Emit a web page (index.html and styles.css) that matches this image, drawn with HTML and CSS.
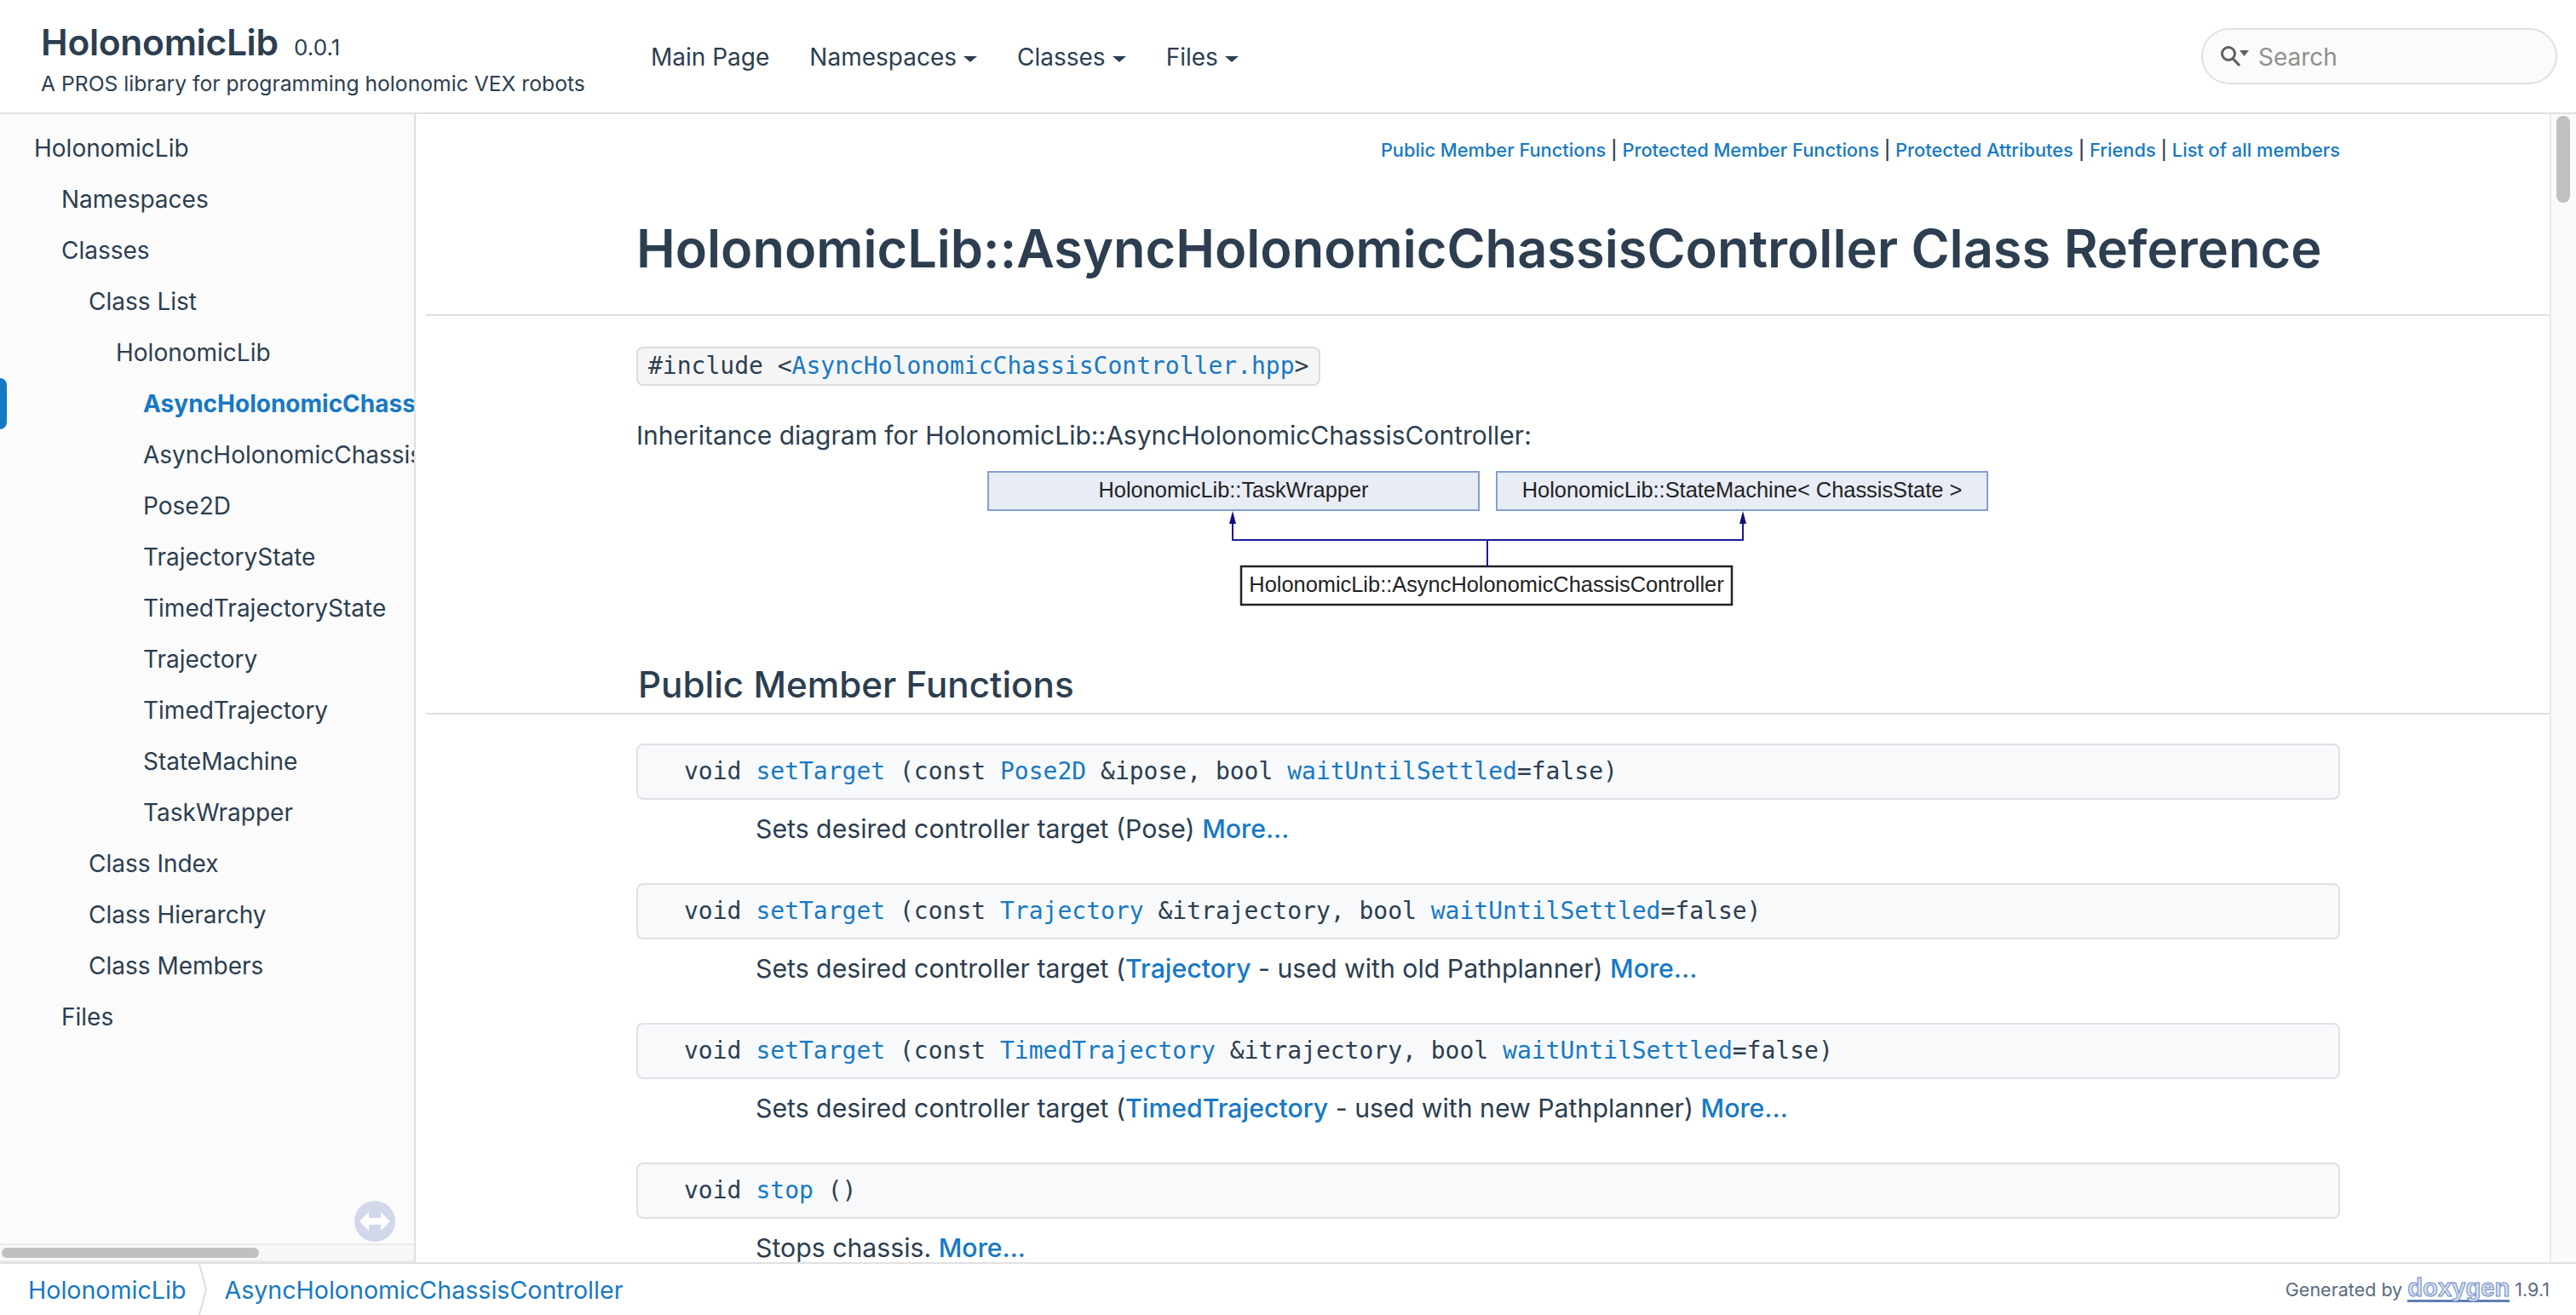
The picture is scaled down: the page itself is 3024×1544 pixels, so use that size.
FILE: index.html
```html
<!DOCTYPE html>
<html lang="en">
<head>
  <meta charset="UTF-8" />
  <title>HolonomicLib: HolonomicLib::AsyncHolonomicChassisController Class Reference</title>
  <link rel="stylesheet" href="styles.css">
</head>
<body>
  <header class="top-bar">
    <div class="project">
      <div class="project-name">HolonomicLib <span class="project-number">0.0.1</span></div>
      <div class="project-brief">A PROS library for programming holonomic VEX robots</div>
    </div>
    <nav class="main-menu">
      <a>Main Page</a>
      <a class="has-caret">Namespaces</a>
      <a class="has-caret">Classes</a>
      <a class="has-caret">Files</a>
    </nav>
    <div class="search-box">
      <svg class="search-icon" width="34" height="26" viewBox="0 0 34 26">
        <circle cx="10" cy="10" r="7.5" fill="none" stroke="#5f5f5f" stroke-width="3"/>
        <path d="M15 15.5 L23 24" stroke="#5f5f5f" stroke-width="3.2" fill="none"/>
        <path d="M23 6 H34 L28.5 13 Z" fill="#5f5f5f"/>
      </svg>
      <span class="search-text">Search</span>
    </div>
  </header>

  <div class="middle">
    <aside class="side-nav">
      <div class="tree">
        <div class="tree-item level-0">HolonomicLib</div>
        <div class="tree-item level-1">Namespaces</div>
        <div class="tree-item level-1">Classes</div>
        <div class="tree-item level-2">Class List</div>
        <div class="tree-item level-3">HolonomicLib</div>
        <div class="tree-item level-4 selected">AsyncHolonomicChassisController</div>
        <div class="tree-item level-4">AsyncHolonomicChassisControllerBuilder</div>
        <div class="tree-item level-4">Pose2D</div>
        <div class="tree-item level-4">TrajectoryState</div>
        <div class="tree-item level-4">TimedTrajectoryState</div>
        <div class="tree-item level-4">Trajectory</div>
        <div class="tree-item level-4">TimedTrajectory</div>
        <div class="tree-item level-4">StateMachine</div>
        <div class="tree-item level-4">TaskWrapper</div>
        <div class="tree-item level-2">Class Index</div>
        <div class="tree-item level-2">Class Hierarchy</div>
        <div class="tree-item level-2">Class Members</div>
        <div class="tree-item level-1">Files</div>
      </div>
      <svg class="sync-toggle" width="48" height="48" viewBox="0 0 48 48">
        <circle cx="24" cy="24" r="24" fill="#d0d8ea"/>
        <path d="M6 24 L17 13 V20 H31 V13 L42 24 L31 35 V28 H17 V35 Z" fill="#fff"/>
      </svg>
      <div class="h-scroll"><div class="h-thumb"></div></div>
    </aside>

    <main class="content">
      <div class="summary">
        <a>Public Member Functions</a> | <a>Protected Member Functions</a> | <a>Protected Attributes</a> | <a>Friends</a> | <a>List of all members</a>
      </div>
      <div class="page-title">
        <h1>HolonomicLib::AsyncHolonomicChassisController Class Reference</h1>
      </div>

      <div class="body-block">
        <div class="include-line"><code>#include &lt;<a>AsyncHolonomicChassisController.hpp</a>&gt;</code></div>
        <p class="inherit-text">Inheritance diagram for HolonomicLib::AsyncHolonomicChassisController:</p>
        <div class="diagram">
          <svg width="1176" height="160" viewBox="0 0 1176 160">
            <rect x="1" y="1" width="576" height="45" fill="#e8ecf5" stroke="#84a0d4" stroke-width="2"/>
            <rect x="598" y="1" width="576" height="45" fill="#e8ecf5" stroke="#84a0d4" stroke-width="2"/>
            <rect x="298" y="112" width="576" height="45" fill="#fff" stroke="#222" stroke-width="2.5"/>
            <path d="M288 62 V81 H887 V62 M587 81 V112" fill="none" stroke="#1a1a9c" stroke-width="2"/>
            <path d="M288 47 L292 62 H284 Z M887 47 L891 62 H883 Z" fill="#10107c"/>
            <text class="diagram-label" x="289" y="31" text-anchor="middle">HolonomicLib::TaskWrapper</text>
            <text class="diagram-label" x="886" y="31" text-anchor="middle">HolonomicLib::StateMachine&lt; ChassisState &gt;</text>
            <text class="diagram-label" x="586" y="142" text-anchor="middle">HolonomicLib::AsyncHolonomicChassisController</text>
          </svg>
        </div>
      </div>

      <h2 class="group-title"><span>Public Member Functions</span></h2>

      <div class="body-block">
        <div class="member">
          <div class="member-sig"><span class="member-type">void</span><code><a>setTarget</a> (const <a>Pose2D</a> &amp;ipose, bool <a>waitUntilSettled</a>=false)</code></div>
          <div class="member-desc">Sets desired controller target (Pose) <a class="more">More...</a></div>
        </div>
        <div class="member">
          <div class="member-sig"><span class="member-type">void</span><code><a>setTarget</a> (const <a>Trajectory</a> &amp;itrajectory, bool <a>waitUntilSettled</a>=false)</code></div>
          <div class="member-desc">Sets desired controller target (<a class="more">Trajectory</a> - used with old Pathplanner) <a class="more">More...</a></div>
        </div>
        <div class="member">
          <div class="member-sig"><span class="member-type">void</span><code><a>setTarget</a> (const <a>TimedTrajectory</a> &amp;itrajectory, bool <a>waitUntilSettled</a>=false)</code></div>
          <div class="member-desc">Sets desired controller target (<a class="more">TimedTrajectory</a> - used with new Pathplanner) <a class="more">More...</a></div>
        </div>
        <div class="member">
          <div class="member-sig"><span class="member-type">void</span><code><a>stop</a> ()</code></div>
          <div class="member-desc">Stops chassis. <a class="more">More...</a></div>
        </div>
      </div>
    </main>

    <div class="v-scroll"><div class="v-thumb"></div></div>
  </div>

  <footer class="bottom-bar">
    <div class="crumbs">
      <a>HolonomicLib</a>
      <svg class="crumb-sep" width="12" height="60" viewBox="0 0 12 60"><path d="M1 0 L9 30 L1 60" fill="none" stroke="#ddd" stroke-width="2"/></svg>
      <a>AsyncHolonomicChassisController</a>
    </div>
    <div class="generated">Generated by <span class="doxygen">doxygen</span> 1.9.1</div>
  </footer>
</body>
</html>
```

FILE: styles.css
```css
html, body { margin: 0; height: 100%; }
body {
  display: flex;
  flex-direction: column;
  height: 1544px;
  overflow: hidden;
  font-family: Inter, "Liberation Sans", sans-serif;
  color: #2c3e50;
  background: #fff;
}
a { color: #1779c4; text-decoration: none; }
code { font-family: "DejaVu Sans Mono", monospace; font-size: 28px; }

/* header */
.top-bar {
  flex: none;
  height: 132px;
  border-bottom: 2px solid #e0e0e0;
  display: flex;
  align-items: center;
  padding: 0 22px 0 48px;
}
.project { width: 716px; padding-top: 3px; }
.project-name { font-size: 42.5px; font-weight: 600; line-height: 54px; letter-spacing: -0.3px; color: #2c3e50; }
.project-number { font-size: 26px; font-weight: 400; margin-left: 8px; letter-spacing: 0; }
.project-brief { font-size: 24.7px; line-height: 30px; }
.main-menu { display: flex; flex: 1; gap: 47px; font-size: 28px; padding-top: 2px; }
.main-menu a { color: #2c3e50; }
.has-caret::after {
  content: "";
  display: inline-block;
  margin-left: 8px;
  vertical-align: 4px;
  border-top: 7px solid #2c3e50;
  border-left: 8px solid transparent;
  border-right: 8px solid transparent;
}
.search-box {
  width: 394px;
  height: 62px;
  border: 2px solid #e0e0e0;
  border-radius: 33px;
  background: #fbfbfb;
  display: flex;
  align-items: center;
  padding-left: 20px;
}
.search-icon { margin-right: 11px; }
.search-text { font-size: 28px; color: #909090; padding-top: 1px; }

/* middle */
.middle { flex: 1; display: flex; min-height: 0; }
.side-nav {
  position: relative;
  flex: none;
  width: 486px;
  background: #fbfbfb;
  border-right: 2px solid #e0e0e0;
  display: flex;
  flex-direction: column;
  overflow: hidden;
}
.tree { flex: 1; padding-top: 10px; }
.tree-item {
  position: relative;
  height: 60px;
  line-height: 60px;
  font-size: 28px;
  white-space: nowrap;
}
.level-0 { padding-left: 40px; }
.level-1 { padding-left: 72px; }
.level-2 { padding-left: 104px; }
.level-3 { padding-left: 136px; }
.level-4 { padding-left: 168px; }
.selected {
  font-weight: 700;
  color: #1779c4;
}
.selected::before {
  content: "";
  position: absolute;
  left: 0;
  top: 0;
  width: 8px;
  height: 60px;
  background: #1779c4;
  border-radius: 0 8px 8px 0;
}
.sync-toggle { position: absolute; left: 416px; top: 1276px; }
.h-scroll {
  flex: none;
  height: 15px;
  background: #f8f8f8;
  border-top: 2px solid #eaeaea;
  border-bottom: 2px solid #eaeaea;
  padding: 3px 0 0 2px;
}
.h-thumb { width: 302px; height: 12px; background: #c0c0c0; border-radius: 6px; }

.content { flex: 1; min-width: 0; overflow: hidden; padding: 0 0 0 12px; }
.summary {
  font-size: 21.8px;
  font-weight: 500;
  line-height: 28px;
  text-align: right;
  padding: 28px 246px 0 0;
}
.page-title { border-bottom: 2px solid #e0e0e0; padding: 0 0 0 247px; }
h1 {
  margin: 0;
  padding: 62px 0 37px;
  font-size: 61.3px;
  line-height: 80px;
  font-weight: 600;
  white-space: nowrap;
}
.body-block { padding: 0 246px 0 247px; }
.include-line {
  display: inline-block;
  margin-top: 36px;
  padding: 0 12px;
  height: 42px;
  line-height: 42px;
  background: #f5f5f5;
  border: 2px solid #ddd;
  border-radius: 8px;
}
.inherit-text { margin: 37px 0 0; font-size: 30px; line-height: 42px; }
.diagram { display: flex; justify-content: center; margin-top: 21px; }
.diagram-label { font-family: "Liberation Sans", sans-serif; font-size: 25.4px; fill: #222; }
.group-title {
  margin: 0;
  padding: 63px 0 5px 249px;
  border-bottom: 2px solid #e0e0e0;
  font-size: 42.2px;
  line-height: 56px;
  font-weight: 500;
}
.body-block:last-child { padding-top: 34px; }
.member { height: 164px; }
.member-sig {
  height: 62px;
  line-height: 62px;
  background: #f8f9fb;
  border: 2px solid #dee0e4;
  border-radius: 8px;
  display: flex;
  padding-left: 54px;
  white-space: nowrap;
}
.member-type { font-family: "DejaVu Sans Mono", monospace; font-size: 28px; margin-right: 17px; }
.member-desc { padding: 14px 0 0 140px; font-size: 30.25px; line-height: 40px; white-space: nowrap; }
.more { font-weight: 500; }

.v-scroll {
  flex: none;
  width: 31px;
  background: #fafafa;
  border-left: 2px solid #e8e8e8;
  padding: 2px 0 0 6px;
  box-sizing: border-box;
}
.v-thumb { width: 16px; height: 102px; background: #c0c0c0; border-radius: 8px; }

/* footer */
.bottom-bar {
  flex: none;
  height: 60px;
  border-top: 2px solid #e0e0e0;
  display: flex;
  align-items: center;
  justify-content: space-between;
  padding: 0 31px 0 33px;
}
.crumbs { display: flex; align-items: center; font-size: 28.6px; }
.crumb-sep { margin: 0 18px 0 15px; }
.generated { font-size: 21.5px; color: #5b6b80; display: flex; align-items: center; white-space: pre; }
.doxygen {
  font-family: "Liberation Sans", sans-serif;
  font-size: 29.2px;
  font-weight: 700;
  color: #d6dff0;
  -webkit-text-stroke: 1px #6f8cc0;
  border-bottom: 3px solid #5f7fb5;
  line-height: 27px;
}
```
